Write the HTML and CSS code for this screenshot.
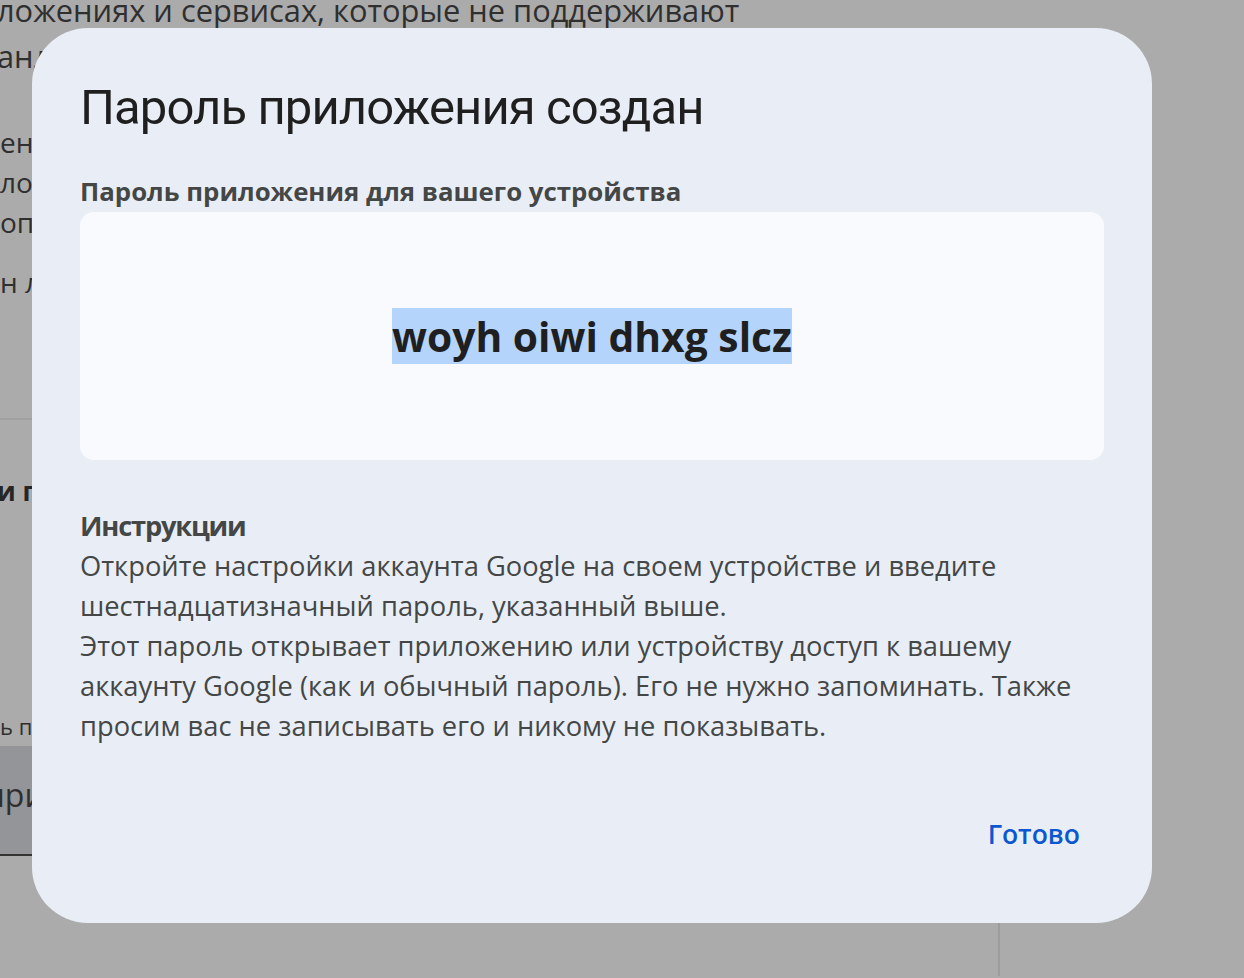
FILE: index.html
```html
<!DOCTYPE html>
<html lang="ru">
<head>
<meta charset="utf-8">
<title>Пароль приложения создан</title>
<link rel="stylesheet" href="styles.css">
</head>
<body>
<div class="page">
  <div class="intro">
    <div>ложениях и сервисах, которые не поддерживают</div>
    <div>андарты безопасности.</div>
  </div>
  <div class="para">
    <div>ений, рекомендуем использовать</div>
    <div>ложения с поддержкой современных</div>
    <div>опасности.</div>
  </div>
  <div class="para note">н либо не поддерживается</div>
  <hr class="divider">
  <div class="subhead">и пароли приложений</div>
  <div class="small">ь пароль приложения</div>
  <div class="field">приложения</div>
  <div class="cols"></div>
</div>

<div class="scrim">
  <div class="dialog" role="dialog" aria-labelledby="dlg-title">
    <h1 class="dialog-title" id="dlg-title">Пароль приложения создан</h1>
    <div class="pw-label">Пароль приложения для вашего устройства</div>
    <div class="pw-box"><span class="pw-text">woyh oiwi dhxg slcz</span></div>
    <div class="instructions">
      <div class="instr-head">Инструкции</div>
      <p class="instr-text">Откройте настройки аккаунта Google на своем устройстве и введите<br>шестнадцатизначный пароль, указанный выше.</p>
      <p class="instr-text">Этот пароль открывает приложению или устройству доступ к вашему<br>аккаунту Google (как и обычный пароль). Его не нужно запоминать. Также<br>просим вас не записывать его и никому не показывать.</p>
    </div>
    <div class="actions">
      <button class="btn-text" type="button">Готово</button>
    </div>
  </div>
</div>
</body>
</html>
```
FILE: styles.css
```css
html, body {
  margin: 0;
  padding: 0;
}
body {
  width: 1244px;
  height: 978px;
  overflow: hidden;
  background: #ababab;
  font-family: "Open Sans", "Noto Sans", sans-serif;
  position: relative;
}

/* dimmed background page */
.page {
  width: 1003px;
  margin-left: -3px;
  margin-top: -13px;
  color: #2f2f2f;
  white-space: nowrap;
}
.intro {
  font-size: 30.8px;
  line-height: 46px;
}
.para {
  font-size: 28px;
  line-height: 40px;
  margin-top: 43px;
  padding-left: 3px;
}
.para.note {
  margin-top: 20px;
}
.divider {
  margin: 116px 0 0 0;
  border: 0;
  height: 2px;
  background: #a0a0a0;
}
.subhead {
  margin-top: 53px;
  font-size: 26px;
  line-height: 36px;
  font-weight: 700;
  color: #262626;
}
.small {
  margin-top: 202px;
  font-size: 22px;
  line-height: 30px;
  padding-left: 3px;
}
.field {
  margin-top: 5px;
  width: 900px;
  height: 110px;
  box-sizing: border-box;
  padding-top: 26px;
  font-size: 32px;
  line-height: 46px;
  background: #939598;
  border-bottom: 2px solid #333333;
  text-indent: -12px;
}
.cols {
  height: 120px;
  border-right: 2px solid #9d9d9d;
}

/* modal */
.scrim {
  position: absolute;
  inset: 0;
}
.dialog {
  position: absolute;
  left: 32px;
  top: 28px;
  width: 1120px;
  height: 895px;
  box-sizing: border-box;
  padding: 48px;
  background: #e9eef6;
  border-radius: 56px;
  display: flex;
  flex-direction: column;
}
.dialog-title {
  margin: 0;
  font-family: Roboto, "Open Sans", sans-serif;
  font-weight: 400;
  font-size: 49px;
  line-height: 64px;
  letter-spacing: -0.9px;
  color: #1f1f1f;
}
.pw-label {
  margin-top: 33px;
  font-size: 25.8px;
  line-height: 36px;
  font-weight: 700;
  color: #444746;
}
.pw-box {
  margin-top: 3px;
  height: 248px;
  background: #f8fafd;
  border-radius: 14px;
  display: flex;
  align-items: center;
  justify-content: center;
}
.pw-text {
  font-size: 40.8px;
  font-weight: 700;
  color: #1f1f1f;
  background: #b5d4fb;
  line-height: normal;
}
.instructions {
  margin-top: 46px;
  color: #444746;
  font-size: 27.3px;
  line-height: 40px;
}
.instr-head {
  font-weight: 700;
  letter-spacing: -1.2px;
}
.instr-text {
  margin: 0;
  white-space: nowrap;
}
.actions {
  margin-top: 48px;
  display: flex;
  justify-content: flex-end;
}
.btn-text {
  height: 80px;
  padding: 0 24px;
  border: 0;
  background: transparent;
  font-family: "Open Sans", sans-serif;
  font-size: 26.5px;
  font-weight: 600;
  line-height: 40px;
  color: #0b57d0;
  cursor: pointer;
  border-radius: 40px;
}
```
